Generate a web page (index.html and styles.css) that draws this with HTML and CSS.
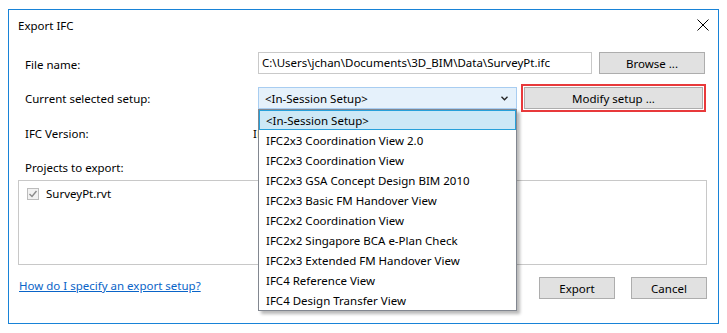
FILE: index.html
```html
<!DOCTYPE html>
<html>
<head>
<meta charset="utf-8">
<link rel="stylesheet" href="styles.css">
</head>
<body>
<div class="dialog">
  <div class="titlebar">
    <span class="title">Export IFC</span>
    <svg class="close" width="12" height="12" viewBox="0 0 12 12"><path d="M0.5 0.5 L11.5 11.5 M11.5 0.5 L0.5 11.5" stroke="#000" stroke-width="1" fill="none"/></svg>
  </div>
  <div class="body">
    <div class="row r1">
      <div class="lbl">File name:</div>
      <div class="controls">
        <div class="textbox">C:\Users\jchan\Documents\3D_BIM\Data\SurveyPt.ifc</div>
        <div class="btn browse">Browse ...</div>
      </div>
    </div>
    <div class="row r2">
      <div class="lbl">Current selected setup:</div>
      <div class="controls">
        <div class="combo-wrap">
          <div class="combo">
            <span>&lt;In-Session Setup&gt;</span>
            <svg class="chev" width="7" height="5" viewBox="0 0 7 5"><path d="M0.5 0.8 L3.5 3.8 L6.5 0.8" stroke="#222" stroke-width="1.3" fill="none"/></svg>
          </div>
          <ul class="popup">
            <li class="sel">&lt;In-Session Setup&gt;</li>
            <li>IFC2x3 Coordination View 2.0</li>
            <li>IFC2x3 Coordination View</li>
            <li>IFC2x3 GSA Concept Design BIM 2010</li>
            <li>IFC2x3 Basic FM Handover View</li>
            <li>IFC2x2 Coordination View</li>
            <li>IFC2x2 Singapore BCA e-Plan Check</li>
            <li>IFC2x3 Extended FM Handover View</li>
            <li>IFC4 Reference View</li>
            <li>IFC4 Design Transfer View</li>
          </ul>
        </div>
        <div class="btn modify">Modify setup ...</div>
      </div>
    </div>
    <div class="row r3">
      <div class="lbl">IFC Version:</div>
      <div class="value">IFC2x3 Coordination View 2.0</div>
    </div>
    <div class="projlbl">Projects to export:</div>
    <div class="listbox">
      <div class="item">
        <svg class="check" width="12" height="12" viewBox="0 0 12 12"><rect x="0.5" y="0.5" width="11" height="11" fill="#f2f2f2" stroke="#bcbcbc"/><path d="M2.5 6 L5 8.5 L9.5 3" stroke="#8a8a8a" stroke-width="1.4" fill="none"/></svg>
        <span>SurveyPt.rvt</span>
      </div>
    </div>
    <div class="footer">
      <a class="link" href="#">How do I specify an export setup?</a>
      <div class="actions">
        <div class="btn act">Export</div>
        <div class="btn act">Cancel</div>
      </div>
    </div>
  </div>
</div>
</body>
</html>
```

FILE: styles.css
```css
html, body {
  margin: 0;
  padding: 0;
  background: #fff;
}
body {
  font-family: "Noto Sans", "Open Sans", sans-serif;
  font-size: 11.5px;
  color: #000;
}
.dialog {
  box-sizing: border-box;
  margin: 9px 0 0 8px;
  width: 711px;
  height: 315px;
  border: 1px solid #1883d7;
  background: #fff;
}
.titlebar {
  height: 30px;
  display: flex;
  align-items: center;
  justify-content: space-between;
  padding: 0 9px 0 9px;
}
.close {
  display: block;
}
.body {
  padding: 0 11px 0 9px;
}
.row {
  display: grid;
  grid-template-columns: 240px 1fr;
  align-items: center;
  height: 22px;
}
.lbl {
  padding-left: 7px;
}
.r1 { margin-top: 12px; }
.r1 .lbl { padding-top: 3px; }
.r2 { margin-top: 13px; }
.r3 { margin-top: 13px; }
.controls {
  display: flex;
  gap: 7px;
  align-items: center;
}
.textbox {
  box-sizing: border-box;
  width: 334px;
  height: 22px;
  border: 1px solid #c9c9c9;
  padding: 0 3px;
  line-height: 20px;
  white-space: nowrap;
  overflow: hidden;
}
.btn {
  box-sizing: border-box;
  height: 22px;
  border: 1px solid #adadad;
  background: #e1e1e1;
  display: flex;
  align-items: center;
  justify-content: center;
}
.browse { width: 106px; }
.modify {
  width: 179px;
  outline: 2px solid #e8393b;
  outline-offset: 1px;
}
.combo-wrap {
  position: relative;
  width: 259px;
}
.combo {
  box-sizing: border-box;
  height: 22px;
  border: 1px solid #a8cdf1;
  background: #e5f1fb;
  display: flex;
  align-items: center;
  justify-content: space-between;
  padding: 0 8px 0 6px;
}
.chev { display: block; }
.popup {
  position: absolute;
  top: 22px;
  left: 0;
  width: 100%;
  box-sizing: border-box;
  margin: 0;
  padding: 0;
  list-style: none;
  background: #fff;
  border: 1px solid #828790;
  box-shadow: 3px 3px 3px rgba(0,0,0,0.28);
  z-index: 5;
}
.popup li {
  box-sizing: border-box;
  height: 20px;
  line-height: 18px;
  padding: 1px 6px 0;
  border: 1px solid transparent;
  white-space: nowrap;
}
.popup li.sel {
  background: #cce8f6;
  border-color: #26a0da;
}
.value {
  margin-left: -5px;
}
.projlbl {
  margin-top: 16px;
  padding-left: 7px;
  height: 16px;
  line-height: 16px;
}
.listbox {
  box-sizing: border-box;
  margin-top: 4px;
  height: 85px;
  border: 1px solid #c8c8c8;
  padding: 5px 8px;
}
.item {
  display: flex;
  align-items: center;
  gap: 7px;
}
.check { display: block; }
.footer {
  margin-top: 12px;
  display: flex;
  align-items: center;
  justify-content: space-between;
  height: 22px;
}
.link {
  color: #0a64c8;
  text-decoration: underline;
  padding-left: 1px;
  margin-top: -5px;
}
.actions {
  display: flex;
  gap: 16px;
}
.act { width: 76px; }
```
